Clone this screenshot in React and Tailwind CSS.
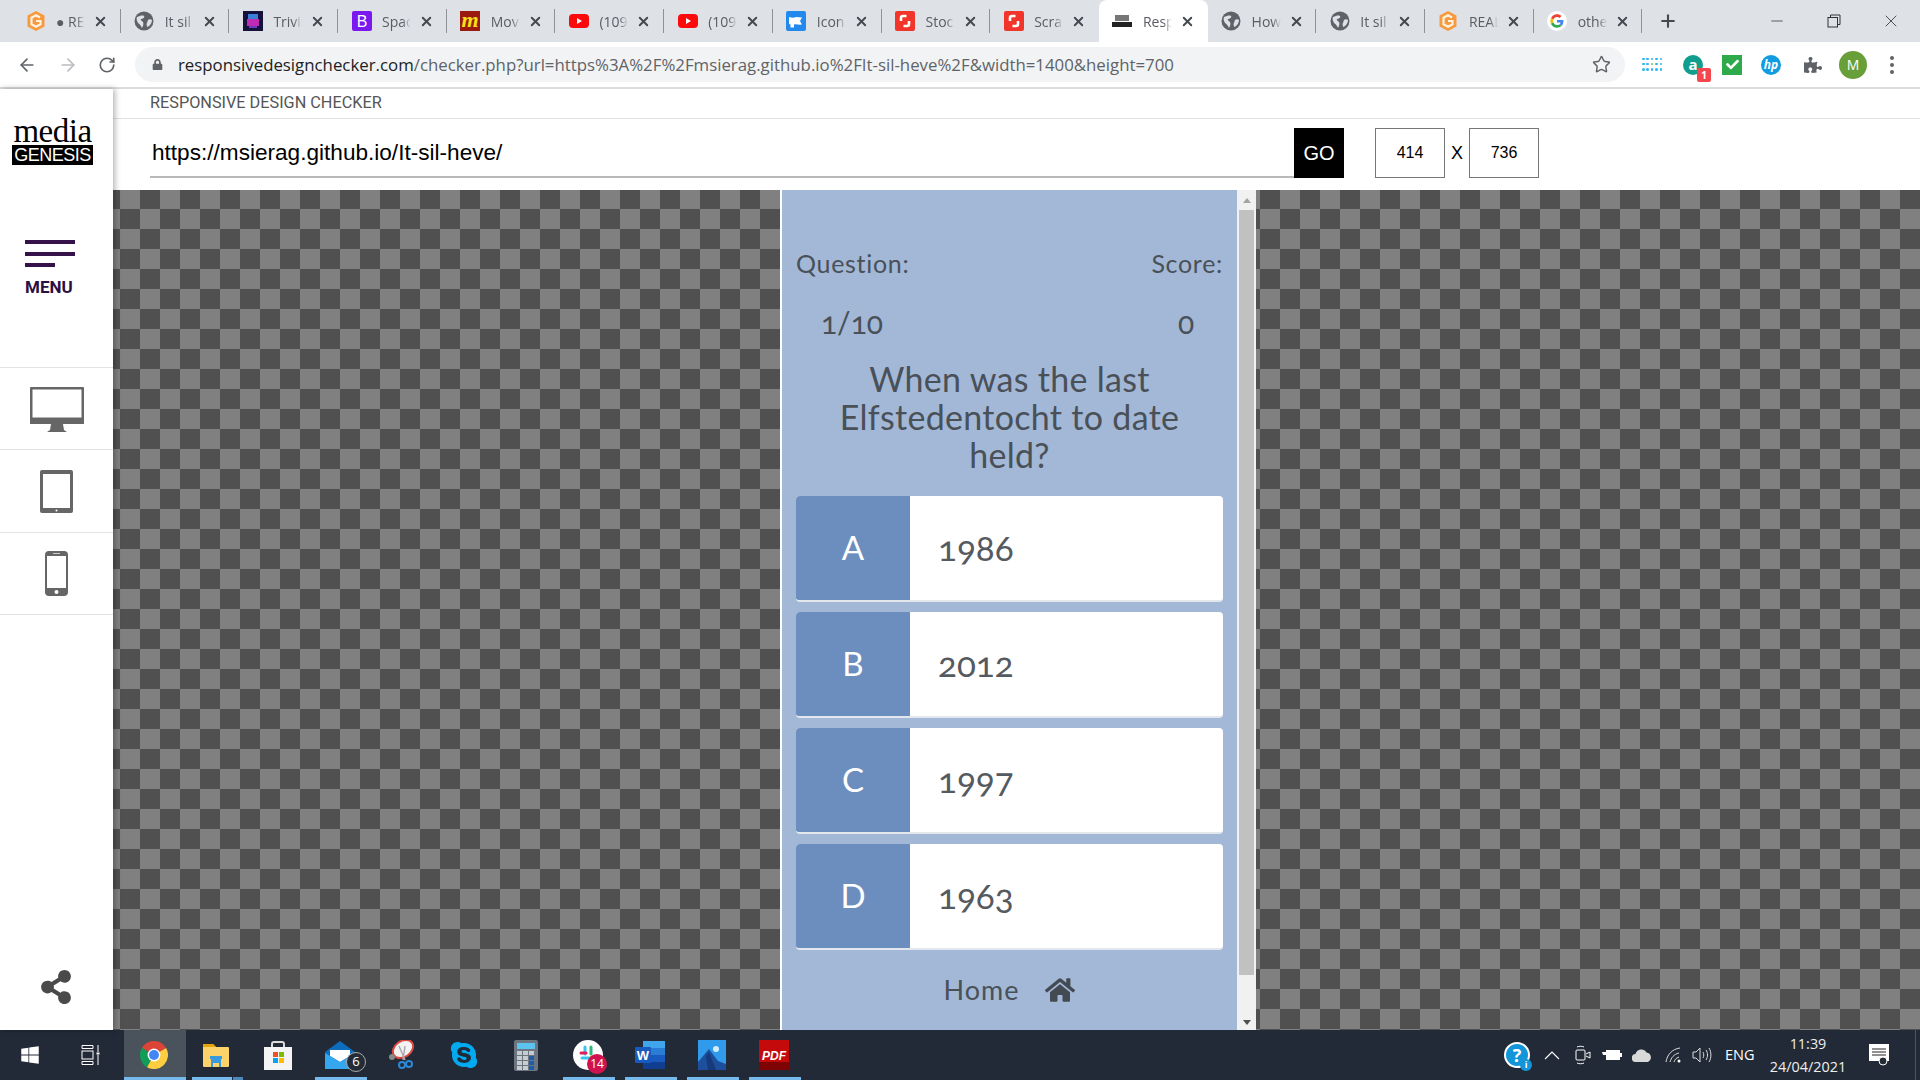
import React from 'react';
import { FaHome, FaShareAlt, FaWindows, FaSkype, FaPuzzlePiece, FaCheck, FaLock } from 'react-icons/fa';
import { ArrowLeft, ArrowRight, RotateCw, Star, Plus, X, Minus } from 'lucide-react';

function Globe() {
  return (
    <svg width="20" height="20" viewBox="0 0 20 20">
      <circle cx="10" cy="10" r="9.500" fill="#5f6368" />
      <path d="M3 6c3-1 5-2 7-1 1 1-1 3-3 3-1 1 1 2 2 3 1 2 0 4-1 6-1-2-2-4-4-5-1-2-2-4-1-6zM14 9c1-1 3-1 4 0 0 3-2 6-5 7 0-2-1-3 0-4z" fill="#dee1e6" />
    </svg>
  );
}

function OrangeG() {
  return (
    <svg width="20" height="20" viewBox="0 0 20 20">
      <path d="M10 0l8.500 4.500v11L10 20l-8.500-4.500v-11z" fill="#f79a3e" />
      <path d="M14 6.500l-4-2.200-4.500 2.400v6.600L10 15.700l4.500-2.400V10H10" fill="none" stroke="#fff2e0" strokeWidth="2.200" />
    </svg>
  );
}

function Trivia() {
  return (
    <svg width="20" height="20" viewBox="0 0 20 20">
      <rect width="20" height="20" fill="#14123a" />
      <rect x="5" y="3" width="10" height="5" fill="#3c7fd9" />
      <rect x="4" y="8" width="12" height="7" fill="#c02bb4" />
      <rect x="6" y="15" width="8" height="2" fill="#6b39c4" />
    </svg>
  );
}

function Boot() {
  return (
    <svg width="20" height="20" viewBox="0 0 20 20">
      <rect width="20" height="20" rx="2" fill="#7b18f0" />
      <text x="10" y="16" textAnchor="middle" fontSize="16" fontFamily="Liberation Sans" fill="#fff">B</text>
    </svg>
  );
}

function Movie() {
  return (
    <svg width="20" height="20" viewBox="0 0 20 20">
      <rect width="20" height="20" fill="#9a1a10" />
      <text x="10" y="16" textAnchor="middle" fontSize="22" fontStyle="italic" fontWeight="700" fontFamily="Liberation Serif" fill="#f7e017">m</text>
    </svg>
  );
}

function Yt() {
  return (
    <svg width="20" height="14" viewBox="0 0 20 14">
      <rect width="20" height="14" rx="4" fill="#fa0a0a" />
      <path d="M8 4l5 3-5 3z" fill="#fff" />
    </svg>
  );
}

function Flag() {
  return (
    <svg width="20" height="20" viewBox="0 0 20 20">
      <rect width="20" height="20" rx="2" fill="#2389ec" />
      <path d="M3 6c3 1 5 1 7 0l6 .5-2 3.500 2 3.500c-3 .5-6-.5-8 0v3H4.500v-3L3 13z" fill="#fff" />
    </svg>
  );
}

function Shutter() {
  return (
    <svg width="20" height="20" viewBox="0 0 20 20">
      <rect width="20" height="20" rx="2" fill="#f1352a" />
      <path d="M11.500 5H8a2 2 0 00-2 2v3M8.500 15H12a2 2 0 002-2v-3" fill="none" stroke="#fff" strokeWidth="2.600" />
    </svg>
  );
}

function MiniLogo() {
  return (
    <svg width="20" height="14" viewBox="0 0 20 14">
      <rect x="3" y="1" width="14" height="6" fill="#777" />
      <rect y="8" width="20" height="5" fill="#222" />
    </svg>
  );
}

function GoogleG({ size = 20 }) {
  return (
    <svg width={size} height={size} viewBox="0 0 48 48">
      <circle cx="24" cy="24" r="24" fill="#fff" />
      <g transform="translate(8 8) scale(.667)">
        <path fill="#EA4335" d="M24 9.500c3.500 0 6.700 1.200 9.200 3.600l6.900-6.900C35.900 2.400 30.500 0 24 0 14.600 0 6.500 5.400 2.600 13.200l8 6.200C12.400 13.700 17.700 9.500 24 9.500z" />
        <path fill="#4285F4" d="M47 24.500c0-1.600-.1-3.100-.4-4.500H24v9h12.900c-.6 3-2.200 5.500-4.800 7.200l7.700 6C44.300 38 47 31.800 47 24.500z" />
        <path fill="#FBBC05" d="M10.500 28.600c-.5-1.400-.8-3-.8-4.600s.3-3.200.8-4.600l-8-6.200C.9 16.400 0 20.100 0 24s.9 7.600 2.600 10.800z" />
        <path fill="#34A853" d="M24 48c6.500 0 11.900-2.100 15.900-5.800l-7.700-6c-2.100 1.400-4.900 2.300-8.200 2.300-6.300 0-11.600-4.200-13.500-9.900l-8 6.200C6.500 42.600 14.600 48 24 48z" />
      </g>
    </svg>
  );
}

const tabs = [
  { icon: <OrangeG />, label: '● RE' },
  { icon: <Globe />, label: 'It sil' },
  { icon: <Trivia />, label: 'Trivia' },
  { icon: <Boot />, label: 'Spac' },
  { icon: <Movie />, label: 'Mov' },
  { icon: <Yt />, label: '(109' },
  { icon: <Yt />, label: '(109' },
  { icon: <Flag />, label: 'Icon' },
  { icon: <Shutter />, label: 'Stoc' },
  { icon: <Shutter />, label: 'Scra' },
  { icon: <MiniLogo />, label: 'Resp', active: true },
  { icon: <Globe />, label: 'How' },
  { icon: <Globe />, label: 'It sil' },
  { icon: <OrangeG />, label: 'REAL' },
  { icon: <GoogleG />, label: 'othe' },
];

function Tab({ icon, label, active, hideDivider }) {
  return (
    <div className={`relative flex h-[42px] w-[108.700px] shrink-0 items-center ${active ? 'rounded-t-lg bg-white' : ''}`}>
      <div className="flex w-[44px] shrink-0 items-center justify-center pl-[3px]">{icon}</div>
      <div className="w-[29px] shrink-0 overflow-hidden whitespace-nowrap text-[14px] text-[#5a5d62] [mask-image:linear-gradient(90deg,#000_70%,transparent)]">{label}</div>
      <X size={15} strokeWidth={3} className="ml-[8px] shrink-0 text-[#45484d]" />
      {!active && !hideDivider && <span className="absolute right-0 top-[9px] h-[24px] w-[1px] bg-[#8f9296]" />}
    </div>
  );
}

function TabStrip() {
  return (
    <div className="flex h-[42px] items-center bg-[#dee1e6] pl-[12px]">
      {tabs.map((t, i) => (
        <Tab key={i} {...t} hideDivider={tabs[i + 1] && tabs[i + 1].active} />
      ))}
      <Plus size={20} strokeWidth={2.5} className="ml-[16px] text-[#45484d]" />
      <div className="ml-auto flex items-center text-[#333]">
        <Minus size={18} strokeWidth={1} className="mr-[41px]" />
        <svg width="14" height="14" viewBox="0 0 14 14" className="mr-[40px]" fill="none" stroke="#333">
          <rect x="1" y="3.500" width="9.500" height="9.500" />
          <path d="M3.500 3V1H13v9.500h-2.500" />
        </svg>
        <X size={20} strokeWidth={1} className="mr-[19px]" />
      </div>
    </div>
  );
}

function Toolbar() {
  return (
    <div className="flex h-[47px] items-center border-b-2 border-[#dcdcdc] bg-white">
      <ArrowLeft size={20} strokeWidth={2} className="ml-[17px] text-[#5f6368]" />
      <ArrowRight size={20} strokeWidth={2} className="ml-[21px] text-[#b9bcc0]" />
      <RotateCw size={18} strokeWidth={2.2} className="ml-[20px] text-[#5f6368]" />
      <div className="ml-[19px] flex h-[35px] w-[1490px] items-center rounded-full bg-[#f1f3f4] pl-[17px] pr-[14px]">
        <FaLock size={11} className="text-[#5f6368]" />
        <div className="ml-[15px] flex-1 whitespace-nowrap text-[16.820px] text-[#5f6368]">
          <span className="text-[#202124]">responsivedesignchecker.com</span>/checker.php?url=https%3A%2F%2Fmsierag.github.io%2FIt-sil-heve%2F&amp;width=1400&amp;height=700
        </div>
        <Star size={19} strokeWidth={1.800} className="text-[#5f6368]" />
      </div>
      <div className="ml-[17px] grid h-[14px] w-[20px] grid-cols-5 gap-[2px]">
        {['#29b6f6', '#29b6f6', '#29b6f6', '#29b6f6', '#29b6f6', '#29b6f6', '#29b6f6', '#8bc34a', '#29b6f6', '#29b6f6', '#29b6f6', '#29b6f6', '#29b6f6', '#29b6f6', '#29b6f6'].map((c, i) => (
          <span key={i} className="h-[2.500px] w-[2.500px] rounded-full" style={{ backgroundColor: c }} />
        ))}
      </div>
      <div className="relative ml-[21px] flex h-[20px] w-[20px] items-center justify-center rounded-full bg-[#0f9d8e] text-[15px] font-bold leading-none text-white">
        a
        <span className="absolute -bottom-[7px] -right-[8px] flex h-[14px] w-[14px] items-center justify-center rounded-[2px] bg-[#f4474d] text-[10px] font-bold text-white">1</span>
      </div>
      <div className="ml-[19px] flex h-[20px] w-[20px] items-center justify-center bg-[#2eaa4a] text-white"><FaCheck size={13} /></div>
      <div className="ml-[19px] flex h-[20px] w-[20px] items-center justify-center rounded-full bg-[#0f9ce0] text-[12px] font-bold italic text-white">hp</div>
      <FaPuzzlePiece size={18} className="ml-[23px] text-[#5f6368]" />
      <div className="ml-[17px] flex h-[28px] w-[28px] items-center justify-center rounded-full bg-[#689f38] text-[14px] text-white">M</div>
      <div className="ml-[23px] flex flex-col gap-[3px]">
        <span className="h-[4px] w-[4px] rounded-full bg-[#5f6368]" />
        <span className="h-[4px] w-[4px] rounded-full bg-[#5f6368]" />
        <span className="h-[4px] w-[4px] rounded-full bg-[#5f6368]" />
      </div>
    </div>
  );
}

function MonitorIcon() {
  return (
    <svg width="54" height="46" viewBox="0 0 54 46">
      <path d="M0 1a1 1 0 011-1h52a1 1 0 011 1v36H0z" fill="#666" />
      <rect x="2.500" y="2.500" width="49" height="28" fill="#fff" />
      <path d="M21 37h12l1 6 3 2H17l3-2z" fill="#666" />
    </svg>
  );
}

function TabletIcon() {
  return (
    <svg width="33" height="43" viewBox="0 0 33 43">
      <rect width="33" height="43" rx="2" fill="#666" />
      <rect x="3" y="4" width="27" height="34" fill="#fff" />
      <circle cx="16.500" cy="40.500" r="1" fill="#fff" />
    </svg>
  );
}

function PhoneIcon() {
  return (
    <svg width="23" height="45" viewBox="0 0 23 45">
      <rect width="23" height="45" rx="4" fill="#666" />
      <rect x="2" y="5" width="19" height="32" fill="#fff" />
      <circle cx="11.500" cy="41" r="2" fill="#fff" />
      <rect x="8" y="2" width="7" height="1" fill="#ccc" />
    </svg>
  );
}

function Sidebar() {
  return (
    <aside className="relative z-10 flex w-[113px] shrink-0 flex-col bg-white shadow-[2px_0_6px_rgba(0,0,0,0.3)]">
      <div className="h-[279px] border-b border-[#e2e2e2] pl-[12px] pt-[28px]">
        <div className="w-[81px] text-center font-['Liberation_Serif',serif] text-[33px] leading-[28px] tracking-[-0.5px] text-black">media</div>
        <div className="flex h-[20px] w-[81px] items-center justify-center bg-black font-['Liberation_Sans',sans-serif] text-[18px] tracking-[-0.5px] text-white">GENESIS</div>
        <div className="mt-[75px] flex flex-col gap-[7.500px] pl-[13px]">
          <span className="h-[4px] w-[50px] bg-[#35124a]" />
          <span className="h-[4px] w-[50px] bg-[#35124a]" />
          <span className="h-[4px] w-[30px] bg-[#35124a]" />
        </div>
        <div className="mt-[10px] pl-[13px] font-['Roboto',sans-serif] text-[17px] font-bold leading-[20px] text-[#2a1040]">MENU</div>
      </div>
      <div className="flex h-[82px] items-center justify-center border-b border-[#e2e2e2] pt-[2px]"><MonitorIcon /></div>
      <div className="flex h-[83px] items-center justify-center border-b border-[#e2e2e2]"><TabletIcon /></div>
      <div className="flex h-[82px] items-center justify-center border-b border-[#e2e2e2]"><PhoneIcon /></div>
      <div className="mt-auto flex justify-center pb-[26px] pr-[2px]"><FaShareAlt size={34} className="text-[#4a4a4a]" /></div>
    </aside>
  );
}

function TopBar() {
  return (
    <div className="h-[101px] shrink-0 bg-white">
      <div className="flex h-[30px] items-center border-b border-[#e2e2e2] pl-[37px] font-['Roboto',sans-serif] text-[16.250px] text-[#555]">RESPONSIVE DESIGN CHECKER</div>
      <div className="flex pl-[37px] pt-[9px]">
        <div className="flex h-[50px] w-[1144px] items-center border-b-2 border-[#b9b9b9] pl-[2px] pt-[1px] font-['Liberation_Sans',sans-serif] text-[22.600px] text-black">https://msierag.github.io/It-sil-heve/</div>
        <div className="flex h-[50px] w-[50px] items-center justify-center bg-black font-['Liberation_Sans',sans-serif] text-[20px] text-white">GO</div>
        <div className="ml-[31px] flex h-[50px] w-[70px] items-center justify-center border border-[#777] font-['Liberation_Sans',sans-serif] text-[16px] text-black">414</div>
        <div className="flex h-[50px] w-[24px] items-center justify-center font-['Liberation_Sans',sans-serif] text-[18px] text-black">X</div>
        <div className="flex h-[50px] w-[70px] items-center justify-center border border-[#777] font-['Liberation_Sans',sans-serif] text-[16px] text-black">736</div>
      </div>
    </div>
  );
}

const answers = [
  { letter: 'A', year: '1986' },
  { letter: 'B', year: '2012' },
  { letter: 'C', year: '1997' },
  { letter: 'D', year: '1963' },
];

function Quiz() {
  return (
    <div className="flex h-full w-[476px] border-l-2 border-white font-['Lato',sans-serif] text-[#4a5058]">
      <div className="flex w-[455px] flex-col bg-[#a2b8d6] px-[14px] pt-[55px]">
        <div className="flex justify-between text-[25px] leading-[36px] tracking-[0.7px]">
          <span>Question:</span>
          <span>Score:</span>
        </div>
        <div className="mt-[23px] flex justify-between text-[30px] leading-[36px] oldstyle-nums">
          <span className="w-[112px] text-center">1/10</span>
          <span className="w-[74px] text-center">0</span>
        </div>
        <h2 className="mt-[20px] text-center text-[34px] font-normal leading-[38px] tracking-[0.3px]">When was the last<br />Elfstedentocht to date<br />held?</h2>
        <div className="mt-[22px] flex flex-col gap-[10px]">
          {answers.map((a) => (
            <div key={a.letter} className="flex h-[106px] overflow-hidden rounded-[4px] border-b-2 border-[#e3e8ee] bg-white">
              <div className="flex w-[114px] items-center justify-center bg-[#6c8ebf] text-[33px] text-white">{a.letter}</div>
              <div className="flex items-center pb-[1px] pl-[28px] text-[35px] text-[#555a61] oldstyle-nums">{a.year}</div>
            </div>
          ))}
        </div>
        <div className="mt-[24px] flex items-center justify-center gap-[26px] text-[27px] leading-[32px] tracking-[1px]">
          <span>Home</span>
          <FaHome size={30} className="text-[#444a52]" />
        </div>
      </div>
      <div className="relative w-[19px] shrink-0 bg-[#f1f1f1] px-[2px] pb-[55px] pt-[20px]">
        <span className="absolute left-[6px] top-[8px] h-0 w-0 border-x-[4px] border-b-[5px] border-x-transparent border-b-[#a3a3a3]" />
        <div className="h-full bg-[#c1c1c1]" />
        <span className="absolute bottom-[5px] left-[6px] h-0 w-0 border-x-[4px] border-t-[5px] border-x-transparent border-t-[#505050]" />
      </div>
    </div>
  );
}

function ChromeIcon() {
  return (
    <svg width="28" height="28" viewBox="0 0 48 48">
      <path d="M24 24L44.800 12A24 24 0 003.200 12z" fill="#db4437" />
      <path d="M24 24L3.200 12A24 24 0 0012 44.800z" fill="#0f9d58" />
      <path d="M24 24L12 44.800A24 24 0 0044.800 12z" fill="#ffcd40" />
      <circle cx="24" cy="24" r="11" fill="#fff" />
      <circle cx="24" cy="24" r="8.500" fill="#4285f4" />
    </svg>
  );
}

function Explorer() {
  return (
    <svg width="28" height="26" viewBox="0 0 28 26">
      <path d="M1 3a1 1 0 011-1h9l3 3h12a1 1 0 011 1v18a1 1 0 01-1 1H2a1 1 0 01-1-1z" fill="#fcd36a" />
      <path d="M1 3a1 1 0 011-1h9l3 3H1z" fill="#e5a50a" />
      <path d="M9 16h10v9h-2v-4h-6v4H9z" fill="#3a9bdc" />
      <rect x="8" y="14" width="12" height="3" fill="#3a9bdc" />
    </svg>
  );
}

function StoreIcon() {
  return (
    <svg width="28" height="30" viewBox="0 0 28 30">
      <path d="M8 8V4a2 2 0 012-2h8a2 2 0 012 2v4" fill="none" stroke="#ddd" strokeWidth="2" />
      <rect y="7" width="28" height="23" fill="#f4f4f4" />
      <rect x="9" y="12" width="5" height="5" fill="#f25022" />
      <rect x="15" y="12" width="5" height="5" fill="#7fba00" />
      <rect x="9" y="18" width="5" height="5" fill="#00a4ef" />
      <rect x="15" y="18" width="5" height="5" fill="#ffb900" />
    </svg>
  );
}

function MailIcon() {
  return (
    <div className="relative">
      <svg width="30" height="28" viewBox="0 0 30 28">
        <path d="M15 0l15 11v17H0V11z" fill="#0d6ebd" />
        <path d="M5 9h20v6l-10 6-10-6z" fill="#fff" />
        <path d="M0 12l15 9 15-9v16H0z" fill="#35a7ee" />
      </svg>
      <span className="absolute -bottom-[3px] -right-[11px] flex h-[20px] w-[20px] items-center justify-center rounded-full border border-[#aaa] bg-[#222b36] text-[13px] text-white">6</span>
    </div>
  );
}

function SnipIcon() {
  return (
    <svg width="26" height="30" viewBox="0 0 26 30">
      <ellipse cx="14" cy="9" rx="11" ry="8" transform="rotate(-35 14 9)" fill="#f2f2f2" stroke="#d8483c" strokeWidth="2" />
      <path d="M10 6l6 14M16 6l-2 14" stroke="#aaa" strokeWidth="1.500" />
      <circle cx="13" cy="25" r="3" fill="none" stroke="#2d89d6" strokeWidth="2" />
      <circle cx="20" cy="24" r="3" fill="none" stroke="#2d89d6" strokeWidth="2" />
      <circle cx="3" cy="17" r="3" fill="#888" />
    </svg>
  );
}

function CalcIcon() {
  return (
    <svg width="24" height="31" viewBox="0 0 24 31">
      <rect width="24" height="31" rx="2" fill="#6d7680" />
      <rect x="3" y="3" width="18" height="6" fill="#5cc2ee" />
      {[11, 16, 21, 26].map((y) => [3, 9, 15].map((x) => (
        <rect key={`${x}-${y}`} x={x} y={y} width="5" height="4" fill={x === 15 && y > 15 ? '#1c5fa8' : '#c7ccd1'} />
      )))}
    </svg>
  );
}

function SlackIcon() {
  return (
    <div className="relative">
      <svg width="30" height="30" viewBox="0 0 30 30">
        <circle cx="15" cy="15" r="15" fill="#fff" />
        <path d="M12 7v7M9 18h7" stroke="#36c5f0" strokeWidth="3" strokeLinecap="round" />
        <path d="M18 7v7" stroke="#2eb67d" strokeWidth="3" strokeLinecap="round" />
        <path d="M8 13h5" stroke="#e01e5a" strokeWidth="3" strokeLinecap="round" />
        <path d="M18 17h5" stroke="#ecb22e" strokeWidth="3" strokeLinecap="round" />
      </svg>
      <span className="absolute -bottom-[4px] -right-[4px] flex h-[20px] w-[20px] items-center justify-center rounded-full bg-[#d0134f] text-[12px] text-white">14</span>
    </div>
  );
}

function WordIcon() {
  return (
    <svg width="30" height="28" viewBox="0 0 30 28">
      <rect x="8" width="22" height="28" rx="1" fill="#2b7cd3" />
      <rect x="8" width="22" height="7" fill="#41a5ee" />
      <rect x="8" y="14" width="22" height="7" fill="#185abd" />
      <rect x="8" y="21" width="22" height="7" fill="#103f91" />
      <rect y="6" width="16" height="16" rx="1" fill="#185abd" />
      <text x="8" y="19" textAnchor="middle" fontSize="13" fontWeight="700" fontFamily="Liberation Sans" fill="#fff">W</text>
    </svg>
  );
}

function PhotosIcon() {
  return (
    <svg width="28" height="30" viewBox="0 0 28 30">
      <rect width="28" height="30" fill="#2f9bea" />
      <circle cx="18" cy="9" r="3" fill="#d3ecfb" />
      <path d="M0 30V22L11 9l9 12 8 3v6z" fill="#1d4f9c" />
      <path d="M18 30L11 12l-3 4 2 14z" fill="#163a7c" />
    </svg>
  );
}

function PdfIcon() {
  return (
    <svg width="30" height="30" viewBox="0 0 30 30">
      <rect width="30" height="30" fill="#c40a0a" />
      <rect y="22" width="30" height="8" fill="#7e0404" />
      <text x="15" y="20" textAnchor="middle" fontSize="12" fontStyle="italic" fontWeight="700" fontFamily="Liberation Sans" fill="#fff">PDF</text>
    </svg>
  );
}

function TaskView() {
  return (
    <svg width="19" height="20" viewBox="0 0 19 20" fill="none" stroke="#fff" strokeWidth="1" className="mr-[3px]">
      <path d="M1 .5h11M1 3.500h11M1 16.500h11M1 19.500h11M12 .5v3M12 16.500v3M1 .5v3M1 16.500v3" />
      <rect x="1" y="6" width="11" height="8" />
      <path d="M17 0v7M17 10v10" />
      <rect x="15.500" y="7.500" width="3" height="2" fill="#fff" stroke="none" />
    </svg>
  );
}

const dockItems = [
  { icon: <FaWindows size={20} className="text-white" /> },
  { icon: <TaskView /> },
  { icon: <ChromeIcon />, bar: 'full', active: true },
  { icon: <Explorer />, bar: 'stack' },
  { icon: <StoreIcon /> },
  { icon: <MailIcon />, bar: 'short' },
  { icon: <SnipIcon /> },
  { icon: <FaSkype size={30} className="text-[#00a9f0]" /> },
  { icon: <CalcIcon /> },
  { icon: <SlackIcon />, bar: 'short' },
  { icon: <WordIcon />, bar: 'short' },
  { icon: <PhotosIcon />, bar: 'short' },
  { icon: <PdfIcon />, bar: 'short' },
];

function Tray() {
  return (
    <div className="ml-auto flex h-full items-center text-white">
      <div className="relative flex h-[26px] w-[26px] items-center justify-center rounded-full border-2 border-white bg-[#1296d9] text-[18px] font-bold">
        ?
        <span className="absolute -bottom-[5px] -right-[4px] flex h-[12px] w-[12px] items-center justify-center rounded-full bg-[#1296d9] text-[9px]">i</span>
      </div>
      <svg width="16" height="10" viewBox="0 0 16 10" fill="none" stroke="#fff" className="ml-[14px]"><path d="M1 9l7-7 7 7" strokeWidth="1.200" /></svg>
      <svg width="16" height="20" viewBox="0 0 16 20" fill="none" stroke="#fff" className="ml-[15px]">
        <rect x="1" y="5" width="9" height="10" rx="1" />
        <path d="M11 9l4-2v6l-4-2M2 2c2-1 5-1 7 0M2 18c2 1 5 1 7 0" />
      </svg>
      <svg width="20" height="12" viewBox="0 0 20 12" className="ml-[11px]">
        <rect x="4" y="1" width="14" height="10" fill="#fff" />
        <rect x="18" y="4" width="2" height="4" fill="#fff" />
        <path d="M0 3h4v3H1z" fill="#fff" />
      </svg>
      <svg width="20" height="13" viewBox="0 0 20 13" className="ml-[10px]"><path d="M4 13a4 4 0 01-.5-8 6 6 0 0111-1.500A5 5 0 0116 13z" fill="#d9d9d9" /></svg>
      <svg width="17" height="16" viewBox="0 0 17 16" fill="none" stroke="#ddd" className="ml-[13px]">
        <path d="M1 15C2 8 7 2 15 1M5 15c1-4 4-8 9-9M9 15c.5-2 2-4 5-5" />
        <circle cx="14" cy="14" r="1.500" fill="#fff" stroke="none" />
      </svg>
      <svg width="20" height="16" viewBox="0 0 20 16" fill="none" stroke="#ddd" className="ml-[10px]">
        <path d="M1 5h3l4-4v14l-4-4H1zM11 5c1 2 1 4 0 6M14 3c2 3 2 7 0 10M17 1c2.500 4 2.500 10 0 14" />
      </svg>
      <span className="ml-[13px] w-[30px] whitespace-nowrap text-[14.500px]">ENG</span>
      <div className="ml-[14px] w-[78px] text-center text-[14.400px] leading-[23px] text-[#eee]">
        <div>11:39</div>
        <div>24/04/2021</div>
      </div>
      <svg width="20" height="23" viewBox="0 0 20 23" className="ml-[22px]">
        <path d="M0 0h20v17H0z" fill="#fff" />
        <path d="M3 5h14M3 8h14M3 11h14" stroke="#222" strokeWidth="1" />
        <circle cx="14" cy="17" r="4" fill="#222b36" stroke="#fff" />
      </svg>
      <span className="ml-[26px] h-full w-[1px] bg-[#4b5563]" />
      <span className="w-[4px]" />
    </div>
  );
}

function Taskbar() {
  return (
    <div className="flex h-[50px] shrink-0 items-stretch bg-[#212a36]">
      <div className="flex">
        {dockItems.map((d, i) => (
          <div key={i} className={`relative flex w-[62px] items-center justify-center pr-[2px] ${d.active ? 'bg-[#4a525c]' : ''}`}>
            {d.icon}
            {d.bar === 'full' && <span className="absolute bottom-0 left-0 h-[3px] w-full bg-[#76b9ed]" />}
            {d.bar === 'stack' && <span className="absolute bottom-0 left-[6px] h-[3px] w-[40px] bg-[#76b9ed]" />}
            {d.bar === 'stack' && <span className="absolute bottom-0 left-[47px] h-[3px] w-[10px] bg-[#4e88b8]" />}
            {d.bar === 'short' && <span className="absolute bottom-0 left-[5px] h-[3px] w-[52px] bg-[#76b9ed]" />}
          </div>
        ))}
      </div>
      <Tray />
    </div>
  );
}

export default function App() {
  return (
    <div className="flex h-[1080px] w-[1920px] flex-col overflow-hidden bg-white font-['Open_Sans',sans-serif]">
      <TabStrip />
      <Toolbar />
      <div className="flex min-h-0 flex-1">
        <Sidebar />
        <main className="flex min-w-0 flex-1 flex-col">
          <TopBar />
          <div className="min-h-0 flex-1 bg-[conic-gradient(#505050_25%,#808080_0_50%,#505050_0_75%,#808080_0)] bg-size-[40px_40px] bg-position-[7px_-1px] pl-[667px]">
            <Quiz />
          </div>
        </main>
      </div>
      <Taskbar />
    </div>
  );
}
